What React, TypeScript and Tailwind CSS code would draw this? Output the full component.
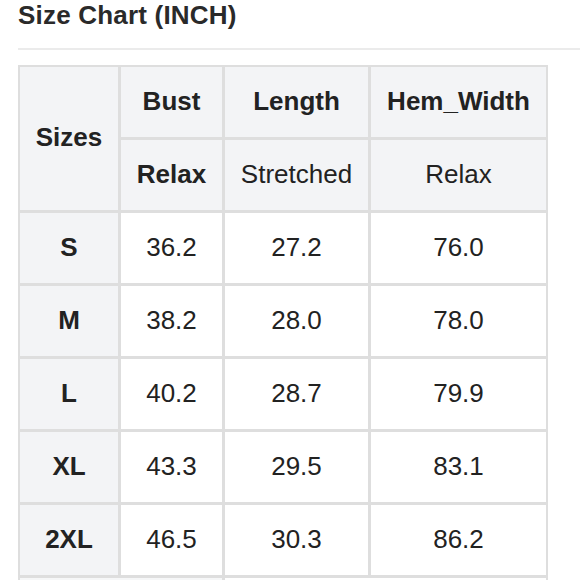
const rows = [
  { size: "S", bust: "36.2", length: "27.2", hem: "76.0" },
  { size: "M", bust: "38.2", length: "28.0", hem: "78.0" },
  { size: "L", bust: "40.2", length: "28.7", hem: "79.9" },
  { size: "XL", bust: "43.3", length: "29.5", hem: "83.1" },
  { size: "2XL", bust: "46.5", length: "30.3", hem: "86.2" },
];

export default function App() {
  return (
    <div
      className="w-[580px] h-[580px] overflow-hidden bg-white text-[#222]"
      style={{ fontFamily: '"Liberation Sans", Arial, sans-serif' }}
    >
      <div className="pl-[18px]">
        <h1 className="text-[26px] leading-[28px] font-bold text-[#2a2a2a] pt-px tracking-[0.2px]">Size Chart (INCH)</h1>
        <div className="mt-[19px] h-[2px] bg-[#ebebeb]" />
        <div className="mt-[15px] w-[530px] grid grid-cols-[98px_101px_143px_175px] auto-rows-[70px] gap-[3px] p-[2px] bg-[#dedede] text-[26px] leading-[30px]">
          <div className="row-span-2 bg-[#f3f4f6] flex items-center justify-center pb-[3px] font-bold">Sizes</div>
          <div className="bg-[#f3f4f6] flex items-center justify-center pb-[3px] font-bold">Bust</div>
          <div className="bg-[#f3f4f6] flex items-center justify-center pb-[3px] font-bold">Length</div>
          <div className="bg-[#f3f4f6] flex items-center justify-center pb-[3px] font-bold">Hem_Width</div>
          <div className="bg-[#f3f4f6] flex items-center justify-center pb-[3px] font-bold">Relax</div>
          <div className="bg-[#f3f4f6] flex items-center justify-center pb-[3px]">Stretched</div>
          <div className="bg-[#f3f4f6] flex items-center justify-center pb-[3px]">Relax</div>
          {rows.map((r) => (
            <div key={r.size} className="contents">
              <div className="bg-[#f3f4f6] flex items-center justify-center pb-[3px] font-bold">{r.size}</div>
              <div className="bg-white flex items-center justify-center pb-[3px]">{r.bust}</div>
              <div className="bg-white flex items-center justify-center pb-[3px]">{r.length}</div>
              <div className="bg-white flex items-center justify-center pb-[3px]">{r.hem}</div>
            </div>
          ))}
          <div className="col-span-2 bg-[#f6f7f8]" />
          <div className="col-span-2 bg-white" />
        </div>
      </div>
    </div>
  );
}
